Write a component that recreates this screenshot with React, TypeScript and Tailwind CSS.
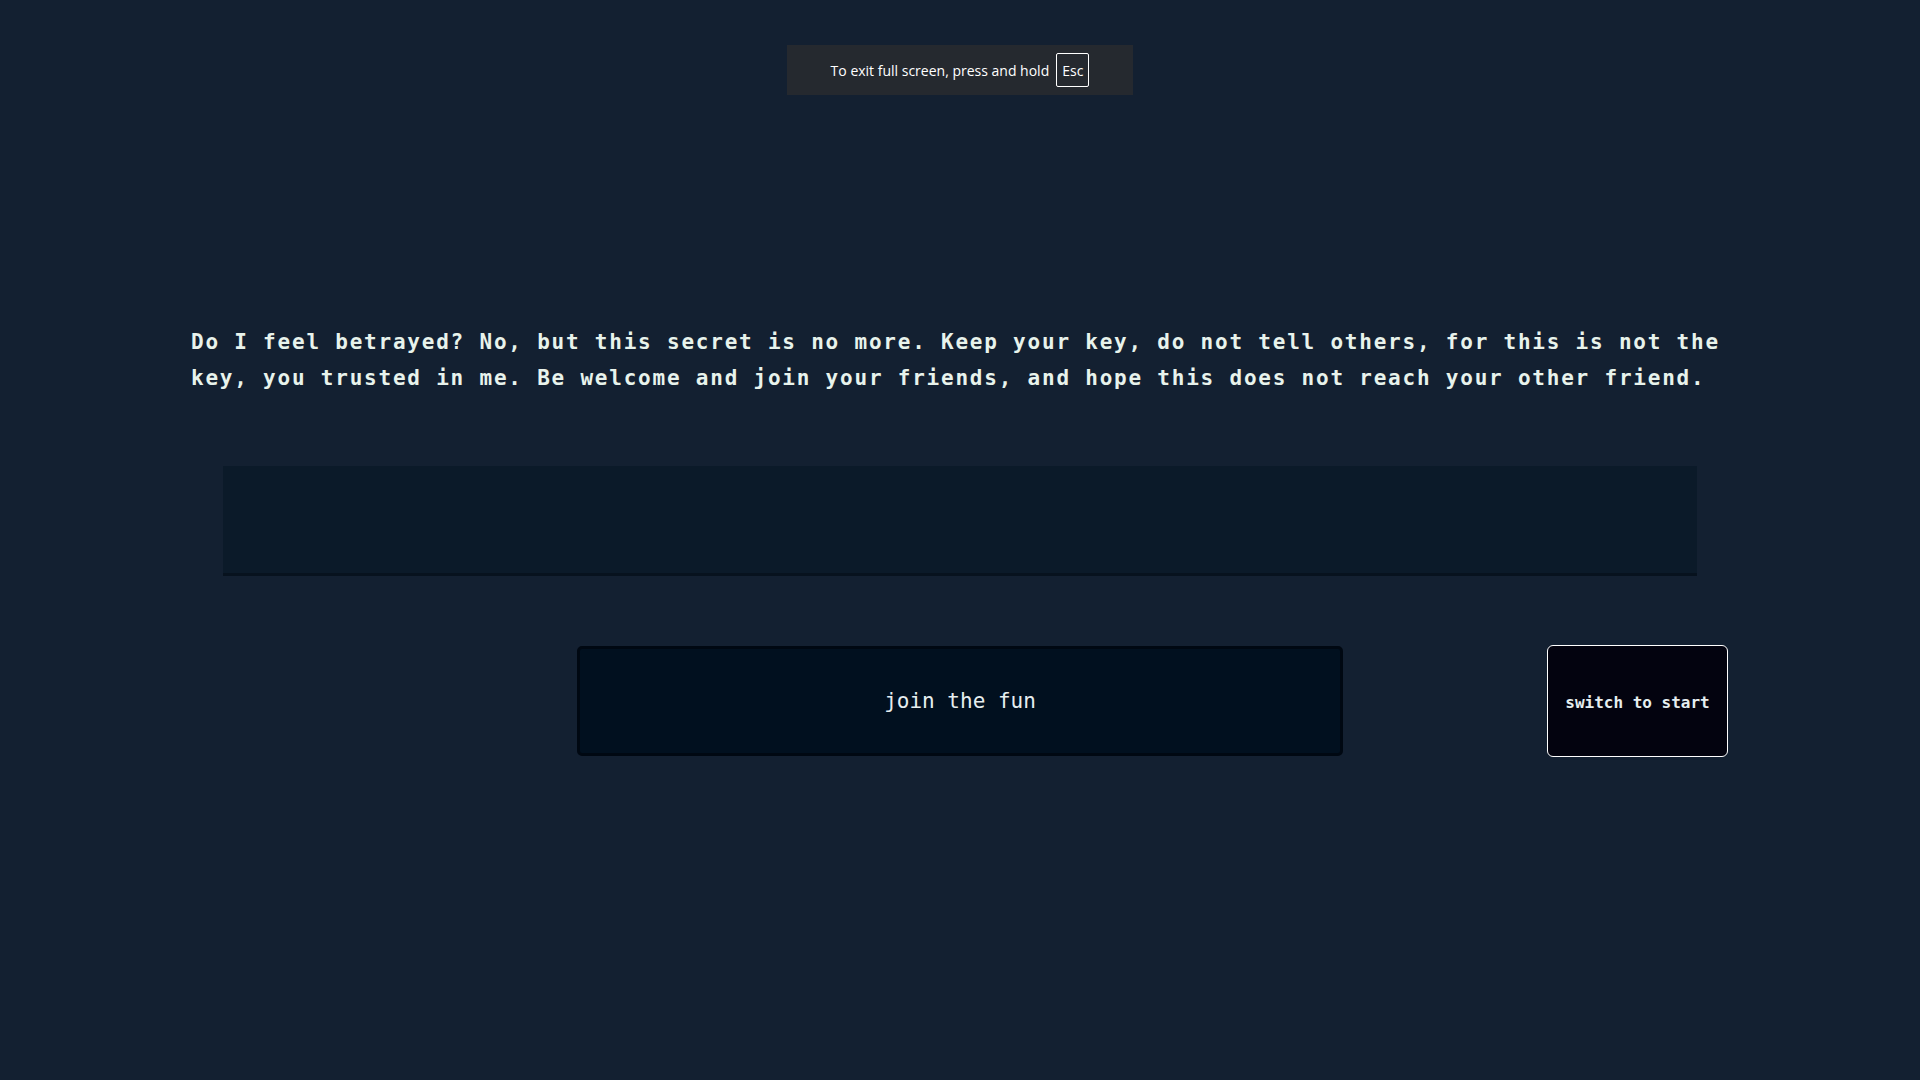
import React from "react";

const mono = "font-['DejaVu_Sans_Mono','Liberation_Mono',monospace]";

export default function App() {
  return (
    <div className="relative min-h-[1080px] w-full bg-[#132031] text-[#e6f0ea]">
      {/* browser fullscreen hint */}
      <div className="absolute left-[787px] top-[45px] flex h-[50px] w-[346px] items-center justify-center gap-[7px] bg-[#25292f] font-['Open_Sans','Noto_Sans',sans-serif] text-[14px] text-white">
        <span>To exit full screen, press and hold</span>
        <span className="flex h-[34px] items-center rounded-[2px] border border-white px-[5px]">Esc</span>
      </div>

      <div className="flex flex-col items-center pt-[324px]">
        <p className={`w-[1538px] text-[21px] font-bold leading-[36px] tracking-[1.78px] text-[#e8f3ec] ${mono}`}>
          Do I feel betrayed? No, but this secret is no more. Keep your key, do not tell others, for this is not the
          key, you trusted in me. Be welcome and join your friends, and hope this does not reach your other friend.
        </p>

        <div className="mt-[70px] h-[110px] w-[1474px] border-b-[3px] border-[#07121e] bg-[#0b1a29]" />

        <div className="relative mt-[70px] flex w-full justify-center">
          <button className={`h-[110px] w-[766px] rounded-[5px] border-[3px] border-[#000812] bg-[#01101f] pt-[2px] text-[21px] text-[#e6eef0] ${mono}`}>
            join the fun
          </button>
          <button className={`absolute left-[1547px] top-[-1px] h-[112px] w-[181px] rounded-[6px] border border-white bg-[#03030f] pt-[4px] text-[16px] font-semibold text-[#e6eef0] ${mono}`}>
            switch to start
          </button>
        </div>
      </div>
    </div>
  );
}
